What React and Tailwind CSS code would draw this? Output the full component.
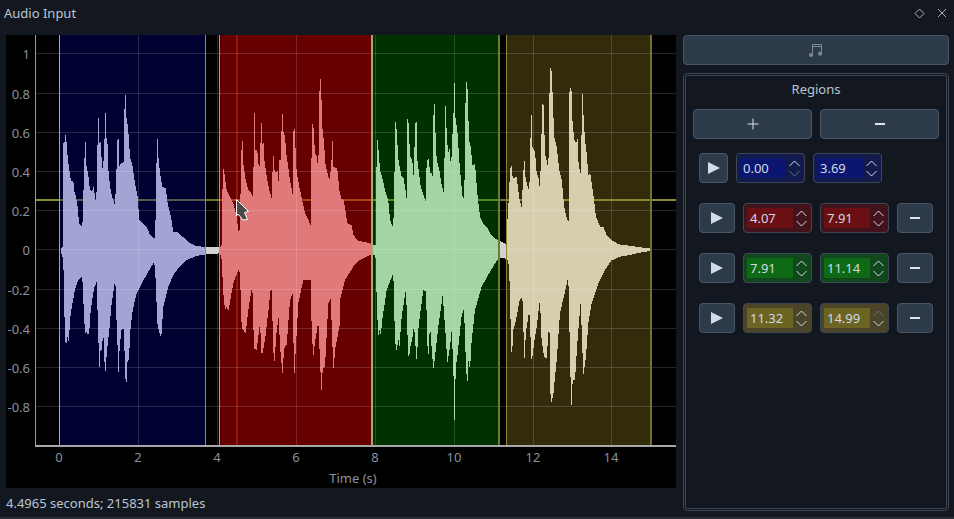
import React from "react";

const z = (ox, oy, arr) => arr.map(([x, y]) => [ox + x / 3, oy + y / 3]);

const upper = [
  ...z(0, 0, [[183,745],[190,740],[190,430],[195,425],[196,385],[197,425],[200,428],[203,475],[208,510],[213,545],[220,540],[222,570],[228,590],[233,620],[237,670],[245,680],[247,687],[250,590],[254,455],[256,400],[258,490],[265,525],[270,570],[276,575],[281,560],[285,590],[289,612],[292,435],[295,430],[296,292],[298,430],[302,425],[306,500],[310,510],[312,420],[316,410],[317,283],[319,415],[322,412],[325,505],[330,560],[336,590],[345,615],[349,530],[352,420],[356,418],[358,500],[362,490],[368,490],[370,525],[373,345],[376,260],[378,345],[384,380],[390,470],[398,500],[405,550],[413,590],[418,660],[430,672],[440,680],[450,705],[463,718],[466,695],[470,460],[472,400],[474,460],[480,520],[487,560],[497,565],[503,610],[513,650],[520,695],[530,695],[550,712],[570,730],[590,738],[610,740],[660,742],
  [665,735],[668,530],[672,495],[674,530],[680,570],[690,590],[700,610],[710,650],[715,692],[720,690],[723,480],[727,405],[730,490],[737,540],[745,570],[752,575],[758,590],[761,480],[764,310],[766,450],[772,450],[775,490],[780,500],[784,322],[786,480],[789,388],[792,470],[800,530],[808,570],[815,595],[818,500],[821,462],[824,520],[829,515],[833,512],[836,550],[838,480],[843,480],[846,310],[850,395],[855,410],[860,470],[870,540],[878,585],[881,350],[885,410],[890,520],[900,570],[915,640],[925,660],[932,675],[935,430],[938,358],[941,390],[945,460],[950,470],[955,510],[958,300]]),
  ...z(320, 0, [[0,210],[4,280],[7,380],[12,430],[17,500],[22,515],[28,540],[34,500],[37,403],[40,500],[52,505],[58,570],[65,600],[70,595],[76,630],[82,670],[95,675],[100,705],[115,722],[130,725],[150,730],[155,733],[165,735],
  [168,735],[168,555],[172,415],[175,440],[180,510],[190,545],[195,570],[205,600],[210,660],[220,685],[224,490],[226,360],[230,390],[235,478],[245,530],[250,530],[256,565],[260,600],[262,355],[266,370],[270,470],[277,480],[281,530],[284,420],[289,320],[291,470],[297,520],[302,560],[317,605],[320,480],[327,478],[330,520],[335,518],[338,530],[340,360],[343,290],[345,365],[350,480],[358,510],[365,555],[372,580],[376,305],[380,395],[384,460],[389,445],[393,505],[397,415],[402,310],[404,228],[406,350],[412,390],[420,510],[428,595],[433,595],[436,330],[439,240],[443,270],[447,418],[452,440],[458,500],[465,490],[472,580],[480,650],[490,672],[500,680],[510,700],[525,715],[537,722],[555,730],
  [558,732],[566,600],[570,515],[574,490],[578,535],[590,530],[597,590],[605,625],[610,520],[613,465],[615,525],[622,555],[628,575],[631,440],[634,318],[637,440],[645,455],[650,520],[655,530],[660,570],[663,460],[667,312],[671,315],[675,460],[682,490],[685,520],[688,310],[691,162],[693,300],[695,180],[698,295],[703,410],[710,440],[718,510],[725,540],[733,620],[740,655],[746,665],[748,280],[754,252],[757,355],[762,415],[768,430],[773,415],[776,500],[782,520],[784,440],[787,267],[790,335],[795,420],[800,460],[805,525],[811,520],[815,550],[822,600],[828,650],[840,680],[850,680],[860,705],[875,720],[895,733],[930,737],[960,742],[993,745]]),
];

const lower = [
  ...z(0, 0, [[183,755]]),
  ...z(0, 260, [[190,0],[195,240],[199,255],[202,225],[205,250],[208,220],[212,160],[218,125],[225,90],[235,60],[247,50],[250,120],[255,220],[260,215],[264,228],[268,215],[272,150],[282,85],[290,65],[294,200],[297,295],[298,340],[300,275],[305,270],[310,215],[313,300],[317,338],[320,280],[328,210],[335,130],[346,55],[350,200],[354,290],[355,352],[358,280],[364,210],[372,205],[375,340],[379,385],[381,320],[384,290],[387,310],[390,220],[398,150],[410,100],[425,70],[445,35],[463,5],[467,60],[472,190],[480,225],[484,230],[490,140],[505,80],[520,45],[535,25],[560,0]]),
  ...z(0, 0, [[590,768],[610,764],[660,760]]),
  ...z(0, 260, [[665,0],[670,100],[675,150],[680,140],[685,155],[690,125],[700,70],[715,30],[720,40],[725,205],[730,210],[737,220],[745,150],[757,75],[762,265],[770,270],[780,190],[785,290],[795,240],[805,155],[814,70],[818,200],[822,325],[830,210],[836,170],[840,260],[848,345],[852,265],[860,255],[870,120],[880,95],[881,385],[885,310],[895,130],[910,60],[932,60],[935,210],[940,290],[945,245],[955,185],[962,350],[965,398],[968,325],[975,320],[985,130],[992,115],[998,275],[1001,335],[1005,270],[1020,190]]),
  ...z(340, 260, [[0,120],[15,60],[40,20],[60,0]]),
  ...z(320, 0, [[150,765],[165,765]]),
  ...z(340, 260, [[108,0],[110,130],[115,230],[120,200],[122,230],[128,170],[140,90],[160,40],[165,240],[170,275],[175,235],[178,265],[185,170],[198,85],[202,210],[206,300],[212,255],[218,230],[222,195],[230,305],[236,195],[250,90],[258,95],[264,310],[270,195],[280,330],[285,290],[295,200],[308,105],[318,240],[322,310],[330,260],[335,210],[340,320],[344,505],[347,325],[352,290],[365,165],[372,145],[378,320],[382,380],[385,300],[390,330],[395,240],[405,150],[425,80],[450,35],[472,0]]),
  ...z(320, 0, [[537,775],[555,775]]),
  ...z(340, 260, [[505,0],[510,90],[513,260],[516,290],[520,210],[528,180],[538,125],[544,112],[548,125],[553,305],[558,215],[568,150],[575,310],[582,250],[590,200],[600,115],[604,230],[612,290],[620,295],[628,180],[632,435],[640,405],[650,300],[660,160],[675,95],[685,50],[690,285],[694,450],[698,360],[705,360],[712,250],[722,125],[730,345],[738,290],[745,190],[755,130],[775,70],[795,30],[815,0]]),
  ...z(320, 0, [[880,780],[900,770],[930,765],[960,758],[993,752]]),
];

const wavePoints = [...upper, ...[...lower].reverse()]
  .map(([x, y]) => `${x.toFixed(1)},${y.toFixed(1)}`)
  .join(" ");

const yTicks = [
  ["1", 53], ["0.8", 93], ["0.6", 132], ["0.4", 171], ["0.2", 210], ["0", 249],
  ["-0.2", 289], ["-0.4", 328], ["-0.6", 367], ["-0.8", 406],
];
const xTicks = [["0", 59], ["2", 138], ["4", 217], ["6", 296], ["8", 375], ["10", 454], ["12", 533], ["14", 611]];

function Chart() {
  return (
    <svg width="670" height="453" viewBox="6 35 670 453" className="block bg-black">
      <rect x="36" y="199" width="640" height="2" fill="#8c8c34" />
      <rect x="236" y="35" width="2" height="411" fill="#b06030" fillOpacity="0.55" />
      <polygon points={wavePoints} fill="#ffffff" shapeRendering="crispEdges" />
      <rect x="205" y="35" width="15" height="411" fill="#000" fillOpacity="0.18" />
      <rect x="499" y="35" width="7" height="411" fill="#000" fillOpacity="0.18" />
      <rect x="59" y="35" width="146" height="411" fill="rgb(0,0,136)" fillOpacity="0.36" />
      <rect x="220" y="35" width="152" height="411" fill="rgb(196,0,0)" fillOpacity="0.52" />
      <rect x="372" y="35" width="127" height="411" fill="rgb(0,136,0)" fillOpacity="0.36" />
      <rect x="506" y="35" width="145" height="411" fill="rgb(142,122,33)" fillOpacity="0.36" />
      {yTicks.map(([t, y]) => (
        <rect key={t} x="36" y={y} width="640" height="1" fill="#fff" fillOpacity="0.15" />
      ))}
      {xTicks.map(([t, x]) => (
        <rect key={t} x={x} y="35" width="1" height="411" fill="#fff" fillOpacity="0.15" />
      ))}
      <rect x="59" y="35" width="1" height="411" fill="#aaa980" />
      <rect x="205" y="35" width="1" height="411" fill="#8f8d5c" />
      <rect x="219" y="35" width="1" height="411" fill="#a5a36a" />
      <rect x="371" y="35" width="2" height="411" fill="#a9a96c" />
      <rect x="498" y="35" width="2" height="411" fill="#6f7a36" />
      <rect x="506" y="35" width="1" height="411" fill="#8a8840" />
      <rect x="650" y="35" width="2" height="411" fill="#75702f" />
      <rect x="35" y="35" width="1" height="412" fill="#9a9a9a" />
      <rect x="35" y="445" width="641" height="2" fill="#a8a8a8" />
      <g fontFamily="'Noto Sans', sans-serif" fontSize="13" fill="#88929c">
        {yTicks.map(([t, y]) => (
          <text key={t} x="30" y={y + 6} textAnchor="end">{t}</text>
        ))}
        {xTicks.map(([t, x]) => (
          <text key={t} x={x} y="462" textAnchor="middle">{t}</text>
        ))}
        <text x="353" y="483" textAnchor="middle">Time (s)</text>
      </g>
      <polygon
        points="236.5,199.5 248.5,211.5 244.5,212.5 247.5,219.5 243,220 238,214 236.5,216"
        fill="#4a4a4a"
        stroke="#ffffff"
        strokeWidth="1"
      />
    </svg>
  );
}

const Chevron = ({ up, dim }) => (
  <svg width="11" height="7" viewBox="0 0 11 7" className="block">
    <path
      d={up ? "M0.5 6 L5.5 1 L10.5 6" : "M0.5 1 L5.5 6 L10.5 1"}
      fill="none"
      stroke={dim ? "#6a7280" : "#d5dce4"}
      strokeWidth="1"
    />
  </svg>
);

function Spin({ value, outer, inner, upDim, downDim }) {
  return (
    <div className={`w-[69px] h-[30px] rounded-[4px] border border-[#3c4858] flex items-center pl-[3px] ${outer}`}>
      <div className={`w-[46px] h-[20px] flex items-center pl-[3px] text-[13px] leading-none text-[#d2dae2] ${inner}`}>
        {value}
      </div>
      <div className="flex flex-col items-center gap-[3px] ml-[3px]">
        <Chevron up dim={upDim} />
        <Chevron dim={downDim} />
      </div>
    </div>
  );
}

const btn = "rounded-[4px] border border-[#4a5666] bg-[#2d3a4a] flex items-center justify-center";

const Play = ({ w }) => (
  <div className={`${btn} h-[30px] ${w}`}>
    <svg width="12" height="12" viewBox="0 0 12 12" className="block">
      <polygon points="0,0 12,6 0,12" fill="#d3dbe6" />
    </svg>
  </div>
);

const Minus = () => (
  <div className={`${btn} w-[36px] h-[30px]`}>
    <div className="w-[10px] h-[2px] bg-[#dde3ea]" />
  </div>
);

const rows = [
  { a: "4.07", b: "7.91", o: "bg-[#42131a]", i: "bg-[#6a0f14]" },
  { a: "7.91", b: "11.14", o: "bg-[#10481c]", i: "bg-[#0e6a14]" },
  { a: "11.32", b: "14.99", o: "bg-[#4a4528]", i: "bg-[#6c6422]", bUpDim: true },
];

export default function App() {
  return (
    <div className="w-[954px] h-[519px] bg-[#131820] flex flex-col overflow-hidden border-b-2 border-[#2a2f36]" style={{ fontFamily: "'Noto Sans', sans-serif" }}>
      <div className="h-[26px] flex items-center pl-[4px] pr-[7px] pt-[2px] text-[13px] text-[#b9c6d3]">
        <span className="flex-1">Audio Input</span>
        <svg width="11" height="11" viewBox="0 0 11 11" className="block mr-[12px] -mt-[2px]">
          <path d="M5.5 1 L10 5.5 L5.5 10 L1 5.5 Z" fill="none" stroke="#a7b0ba" />
        </svg>
        <svg width="10" height="10" viewBox="0 0 10 10" className="block -mt-[2px]">
          <path d="M1 1 L9 9 M9 1 L1 9" fill="none" stroke="#a7b0ba" />
        </svg>
      </div>
      <div className="flex-1 flex pl-[6px] pt-[9px]">
        <div className="w-[670px] flex flex-col">
          <Chart />
          <div className="mt-[6px] text-[13px] leading-[18px] text-[#b9c6d3]">4.4965 seconds; 215831 samples</div>
        </div>
        <div className="ml-[7px] w-[266px] flex flex-col">
          <div className={`${btn} h-[30px]`}>
            <svg width="14" height="14" viewBox="0 0 14 14" className="block">
              <path d="M3.5 11.5 V1.5 H12.5 V10 M3.5 3.5 H12.5" fill="none" stroke="#7f8a98" strokeWidth="1" />
              <circle cx="2" cy="12" r="2" fill="#7f8a98" />
              <circle cx="11" cy="10.8" r="2" fill="#7f8a98" />
            </svg>
          </div>
          <div className="mt-[8px] h-[438px] rounded-[4px] border border-[#3d4652] p-[1px]">
            <div className="h-full rounded-[3px] border border-[#3d4652] pt-[4px] px-[7px]">
              <div className="text-center text-[13px] leading-[18px] text-[#b9c6d3]">Regions</div>
              <div className="mt-[11px] flex gap-[8px]">
                <div className={`${btn} w-[119px] h-[30px]`}>
                  <svg width="12" height="12" viewBox="0 0 12 12" className="block">
                    <path d="M6 0.5 V11.5 M0.5 6 H11.5" stroke="#dde3ea" strokeWidth="1" />
                  </svg>
                </div>
                <div className={`${btn} w-[119px] h-[30px]`}>
                  <div className="w-[10px] h-[2px] bg-[#dde3ea]" />
                </div>
              </div>
              <div className="mt-[14px] ml-[6px] flex gap-[8px]">
                <Play w="w-[29px]" />
                <Spin value="0.00" outer="bg-[#131a4c]" inner="bg-[#0b1670]" downDim />
                <Spin value="3.69" outer="bg-[#131a4c]" inner="bg-[#0b1670]" />
              </div>
              {rows.map((r) => (
                <div key={r.a} className="mt-[20px] ml-[6px] flex gap-[8px]">
                  <Play w="w-[36px]" />
                  <Spin value={r.a} outer={r.o} inner={r.i} />
                  <Spin value={r.b} outer={r.o} inner={r.i} upDim={r.bUpDim} />
                  <Minus />
                </div>
              ))}
            </div>
          </div>
        </div>
      </div>
    </div>
  );
}
